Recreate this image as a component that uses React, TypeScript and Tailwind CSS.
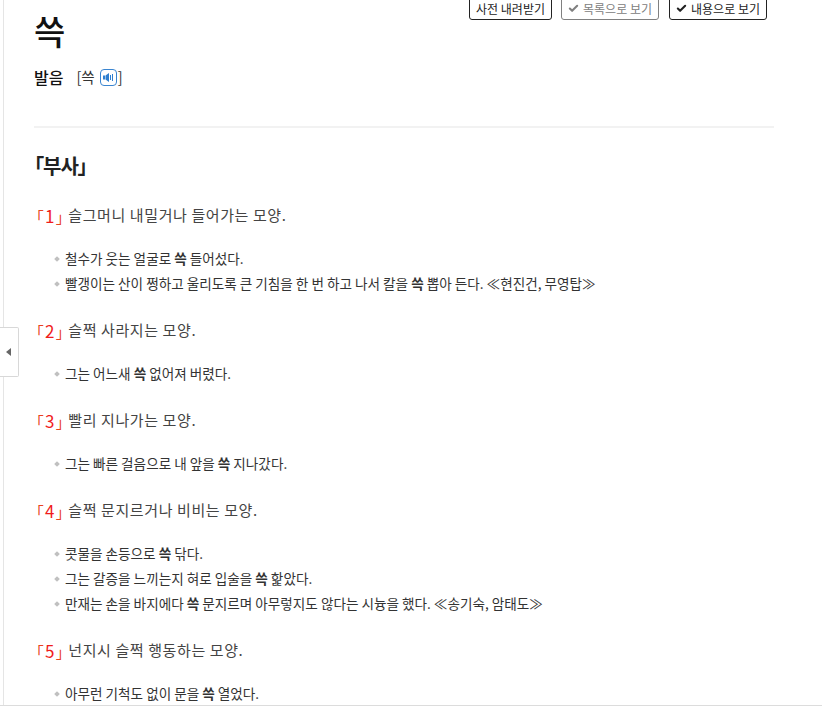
import React from 'react';
import { Check } from 'lucide-react';

const senses = [
  {
    num: '1',
    text: '슬그머니 내밀거나 들어가는 모양.',
    examples: [
      ['철수가 웃는 얼굴로 ', ' 들어섰다.'],
      ['빨갱이는 산이 쩡하고 울리도록 큰 기침을 한 번 하고 나서 칼을 ', ' 뽑아 든다. ≪현진건, 무영탑≫'],
    ],
  },
  { num: '2', text: '슬쩍 사라지는 모양.', examples: [['그는 어느새 ', ' 없어져 버렸다.']] },
  { num: '3', text: '빨리 지나가는 모양.', examples: [['그는 빠른 걸음으로 내 앞을 ', ' 지나갔다.']] },
  {
    num: '4',
    text: '슬쩍 문지르거나 비비는 모양.',
    examples: [
      ['콧물을 손등으로 ', ' 닦다.'],
      ['그는 갈증을 느끼는지 혀로 입술을 ', ' 핥았다.'],
      ['만재는 손을 바지에다 ', ' 문지르며 아무렇지도 않다는 시늉을 했다. ≪송기숙, 암태도≫'],
    ],
  },
  { num: '5', text: '넌지시 슬쩍 행동하는 모양.', examples: [['아무런 기척도 없이 문을 ', ' 열었다.']] },
];

const App: React.FC = () => {
  return (
    <div className="relative h-[711px] w-[822px] overflow-hidden bg-white font-['Noto_Sans_CJK_KR','Liberation_Sans',sans-serif] [font-feature-settings:'palt']">
      <div className="ml-[3px] h-[705px] overflow-hidden border-l border-[#e5e5e5] pl-[30px]">
        <div className="w-[740px]">
          <div className="-mt-[6px] flex justify-end gap-[9px] pr-[7px]">
            <button className="h-[26px] w-[83px] rounded-[3px] border border-[#222] pt-[3px] text-[12px] leading-[20px] text-[#222]">사전 내려받기</button>
            <button className="flex h-[26px] w-[98px] items-center justify-center gap-[4px] rounded-[3px] border border-[#808080] pt-[3px] text-[12px] leading-[20px] text-[#808080]">
              <Check size={11} strokeWidth={4.5} />목록으로 보기
            </button>
            <button className="ml-px flex h-[26px] w-[98px] items-center justify-center gap-[4px] rounded-[3px] border border-[#222] pt-[3px] text-[12px] leading-[20px] text-[#222]">
              <Check size={11} strokeWidth={4.5} />내용으로 보기
            </button>
          </div>
          <h1 className="-mt-[9px] text-[34px] leading-[40px] font-medium text-[#111]">쓱</h1>
          <div className="mt-[14px] flex h-[24px] items-center text-[#333]">
            <span className="text-[16px] font-medium text-[#111]">발음</span>
            <span className="ml-[13px] flex items-center text-[14.5px]">
              [쓱
              <span className="mr-[1px] ml-[5px] flex h-[17px] w-[17px] items-center justify-center rounded-[4px] border border-[#3a85d0]">
                <svg width="11" height="11" viewBox="0 0 11 11" fill="#2f7fd0">
                  <path d="M0 3.500h2v4H0zM2.500 3.500 6 1v9L2.500 7.500z" />
                  <path d="M7 3h1v5H7zM9 2h1v7H9z" />
                </svg>
              </span>
              ]
            </span>
          </div>
          <div className="mt-[37px] h-[2px] bg-[#f2f2f2]" />
          <h2 className="mt-[23px] h-[30px] text-[20px] leading-[30px] font-bold tracking-[-1px] text-[#222]">「부사」</h2>
          <div className="mt-[22px]">
            {senses.map((sense) => (
              <div key={sense.num} className="mb-[21px]">
                <p className="flex h-[25px] items-center pl-[2px] text-[15px] tracking-[0.6px] text-[#444]">
                  <span className="mr-[4px] text-[#e8431f]">
                    「<span className="mx-[1px] text-[17px] text-[#f01c1c]">{sense.num}</span>」
                  </span>
                  {sense.text}
                </p>
                <ul className="mt-[19px] -translate-y-[1px]">
                  {sense.examples.map((parts) => (
                    <li key={parts[0]} className="flex h-[25px] items-center pl-[21px] text-[13.6px] text-[#333]">
                      <span className="mr-[6px] h-[4px] w-[4px] rotate-45 bg-[#c0c0c0]" />
                      <span>
                        {parts[0]}
                        <b className="font-bold">쓱</b>
                        {parts[1]}
                      </span>
                    </li>
                  ))}
                </ul>
              </div>
            ))}
          </div>
        </div>
      </div>
      <div className="absolute bottom-[5px] left-0 right-0 h-px bg-[#dcdcdc]" />
      <div className="absolute left-0 top-[327px] flex h-[50px] w-[19px] items-center justify-center rounded-r-[2px] border border-l-0 border-[#d8d8d8] bg-white">
        <svg width="6" height="8" viewBox="0 0 6 8" fill="#666">
          <path d="M5 0v8L0 4z" />
        </svg>
      </div>
    </div>
  );
};

export default App;
